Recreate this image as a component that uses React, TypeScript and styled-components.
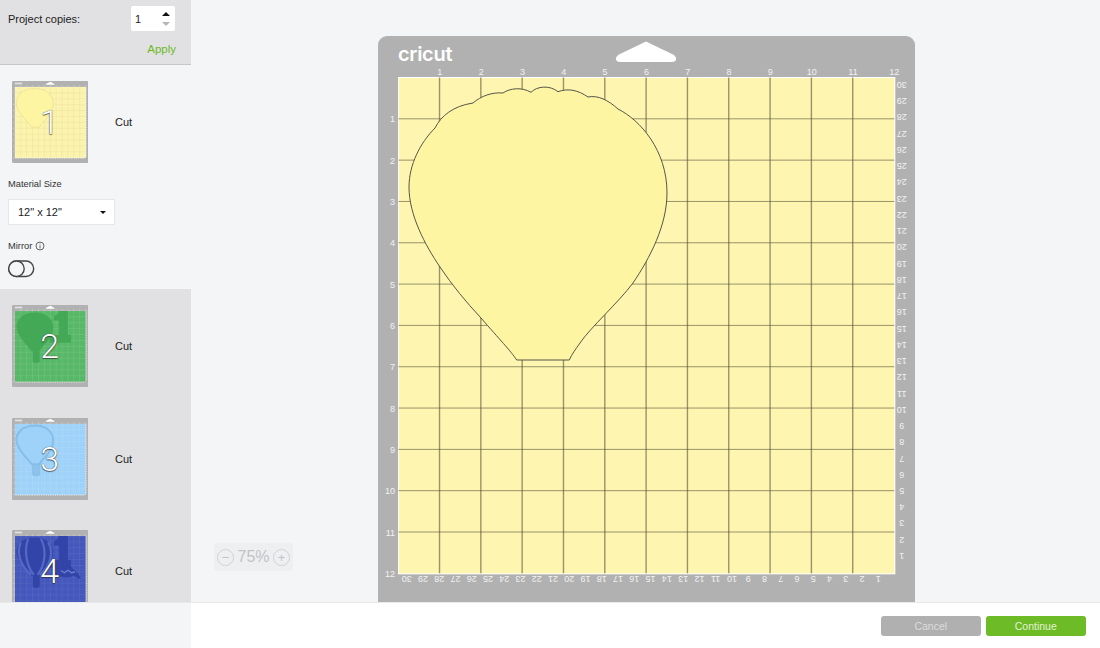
import React from "react";
import styled, { createGlobalStyle } from "styled-components";

const GlobalStyle = createGlobalStyle`
  html, body {
    margin: 0;
    padding: 0;
    height: 100%;
    overflow: hidden;
    background: #f4f5f7;
    font-family: "Liberation Sans", Arial, sans-serif;
    color: #222;
  }
`;

const Page = styled.div`
  width: 1100px;
  height: 648px;
  display: flex;
  flex-direction: column;
`;

const Body = styled.div`
  flex: 1;
  min-height: 0;
  display: flex;
`;

const Sidebar = styled.aside`
  width: 191px;
  flex-shrink: 0;
  overflow: hidden;
  display: flex;
  flex-direction: column;
  background: #e1e1e3;
`;

const CopiesPanel = styled.div`
  height: 65px;
  box-sizing: border-box;
  flex-shrink: 0;
  padding: 6px 16px 0 8px;
  background: #e1e1e3;
  border-bottom: 1px solid #c6c6c8;
`;

const CopiesRow = styled.div`
  display: flex;
  align-items: center;
  justify-content: space-between;
  font-size: 11px;
`;

const Stepper = styled.div`
  width: 44px;
  height: 25px;
  box-sizing: border-box;
  padding: 0 5px 0 4px;
  display: flex;
  align-items: center;
  justify-content: space-between;
  background: #fff;
  border-radius: 2px;
  font-size: 11px;
`;

const StepperArrows = styled.div`
  display: flex;
  flex-direction: column;
  gap: 6px;
`;

const Arrow = styled.span<{ $down?: boolean }>`
  width: 0;
  height: 0;
  border-left: 4px solid transparent;
  border-right: 4px solid transparent;
  ${(p) =>
    p.$down ? "border-top: 4px solid #b5b5b5;" : "border-bottom: 4px solid #111;"}
`;

const ApplyLink = styled.div`
  margin: 11px -1px 0 0;
  text-align: right;
  font-size: 11.5px;
  line-height: 14px;
  color: #6cb926;
`;

const ActiveSection = styled.section`
  height: 224px;
  flex-shrink: 0;
  box-sizing: border-box;
  padding-top: 16px;
  background: #f4f5f7;
`;

const MatList = styled.div`
  padding-top: 16px;
  display: flex;
  flex-direction: column;
  gap: 30.7px;
`;

const MatRow = styled.div`
  display: flex;
  align-items: center;
  padding-left: 11.5px;
`;

const Thumb = styled.div`
  position: relative;
  width: 76.6px;
  height: 82px;
  flex-shrink: 0;

  svg {
    display: block;
    width: 100%;
    height: 100%;
  }
`;

const ThumbDigit = styled.span`
  position: absolute;
  inset: 0;
  display: flex;
  align-items: center;
  justify-content: center;
  font-family: Roboto, "Liberation Sans", sans-serif;
  font-weight: 300;
  font-size: 34px;
  color: #fff;
  text-shadow:
    0 0 1px rgba(30, 30, 30, 1),
    0 1px 1px rgba(30, 30, 30, 0.6);
`;

const CutLabel = styled.span`
  margin-left: 26.9px;
  font-size: 11px;
`;

const OptionLabel = styled.div`
  display: flex;
  align-items: center;
  gap: 3px;
  padding-left: 8px;
  font-size: 9.3px;
  line-height: 12px;
  color: #333;
`;

const SizeLabel = styled(OptionLabel)`
  margin-top: 15px;
`;

const MirrorLabel = styled(OptionLabel)`
  margin-top: 15px;
`;

const SizeSelect = styled.div`
  width: 107px;
  height: 26px;
  box-sizing: border-box;
  margin: 9px 0 0 8px;
  padding: 0 8px 0 9px;
  display: flex;
  align-items: center;
  justify-content: space-between;
  background: #fff;
  border: 1px solid #e6e7ea;
  font-size: 11px;
`;

const Caret = styled.span`
  width: 0;
  height: 0;
  border-left: 3.5px solid transparent;
  border-right: 3.5px solid transparent;
  border-top: 3.5px solid #111;
`;

const MirrorToggle = styled.svg`
  display: block;
  margin: 8px 0 0 8px;
`;

const Workspace = styled.main`
  position: relative;
  flex: 1;
  min-width: 0;
  overflow: hidden;
  display: flex;
  justify-content: center;
  padding: 36px 0 0 2px;
  background: #f4f5f7;
`;

const MainMat = styled.svg`
  display: block;
  flex-shrink: 0;
`;

const ZoomControl = styled.div`
  position: absolute;
  left: 23px;
  top: 543px;
  width: 79px;
  height: 28px;
  box-sizing: border-box;
  padding: 0 3px;
  display: flex;
  align-items: center;
  justify-content: space-between;
  background: #eeeff1;
  border-radius: 3px;
  font-size: 16px;
  color: #c2c3c6;
`;

const ZoomButton = styled.span`
  width: 15px;
  height: 15px;
  display: flex;
  align-items: center;
  justify-content: center;
  border: 1px solid #d2d3d6;
  border-radius: 50%;
  font-size: 13px;
  line-height: 1;
  color: #c2c3c6;
`;

const Footer = styled.footer`
  height: 46px;
  flex-shrink: 0;
  display: flex;
  box-sizing: border-box;
  border-top: 1px solid #e8e9eb;
`;

const FooterAside = styled.div`
  width: 191px;
  background: #f4f5f7;
`;

const FooterActions = styled.div`
  flex: 1;
  display: flex;
  justify-content: flex-end;
  gap: 4.5px;
  padding: 13px 14px 0 0;
  background: #fff;
`;

const ActionButton = styled.button<{ $primary?: boolean }>`
  width: 100.5px;
  height: 20px;
  padding: 0;
  border: 0;
  border-radius: 3px;
  font-family: inherit;
  font-size: 10.5px;
  background: ${(p) => (p.$primary ? "#6cbb27" : "#b0b0b0")};
  color: ${(p) => (p.$primary ? "#e4f2d4" : "#dcdcdc")};
`;

const X0 = 398.5;
const Y0 = 77.5;
const CELL = 41.32;
const END_X = X0 + CELL * 12;
const END_Y = Y0 + CELL * 12;
const inches = Array.from({ length: 12 }, (_, i) => i + 1);
const halfInches = Array.from({ length: 30 }, (_, i) => i);

const BALLOON =
  "M516.7 360 C510 350 500 340 481 318 C466 302 452 285 440 267 C425 245 409 215 409 187 C409 165 420 143 435 128 C441 116 453 106 473 103 C481 96 492 92 503 93 C510 88 522 87 531 92.3 C537 86 550 85 558 91.7 C568 88 578 90 588 97 C598 95 608 100 618 109 C640 120 667 150 667 193 C667 225 650 258 633 283 C618 303 590 328 580 343 C575 350 572 354 569.3 360 Z";
const NECK = "M523 340 H572 V428 Q572 440 560 440 H535 Q523 440 523 428 Z";
const ONE =
  "M672 112 Q700 105 708 78 L770 78 L770 245 L791 245 L791 300 L640 300 L640 245 L708 245 L708 145 L672 145 Z";
const RIBBON =
  "M680 300 L790 290 C810 310 840 340 862 372 L845 378 L810 355 C780 375 730 375 680 350 Z";

type MatColors = { paper: string; line: string; lineOpacity: number; fine?: string };

// the thumbnails use the same page coordinates as the big mat, rim text becomes ticks
const RimLabels = () => (
  <g fontSize="9" fill="#f1f1f1" fontFamily="'Liberation Sans', sans-serif">
    {inches.map((n) => (
      <text key={n} x={X0 + CELL * n} y="75" textAnchor="middle">
        {n}
      </text>
    ))}
    {inches.map((n) => (
      <text key={n} x="395" y={Y0 + CELL * n + 3.5} textAnchor="end">
        {n}
      </text>
    ))}
    {halfInches.map((i) => (
      <text
        key={i}
        x={406.7 + 16.26 * i}
        y="578.8"
        textAnchor="middle"
        transform={`rotate(180 ${406.7 + 16.26 * i} 578.8)`}
        dy="3"
      >
        {30 - i}
      </text>
    ))}
    {halfInches.map((i) => (
      <text
        key={i}
        x="901.7"
        y={85 + 16.24 * i}
        textAnchor="middle"
        transform={`rotate(180 901.7 ${85 + 16.24 * i})`}
        dy="3"
      >
        {30 - i}
      </text>
    ))}
  </g>
);

const RimTicks = () => (
  <g fill="#f1f1f1" opacity="0.75">
    <rect x="398" y="47" width="52" height="12" />
    {inches.map((n) => (
      <rect key={n} x={X0 + CELL * n - 3} y="68" width="6" height="6" />
    ))}
    {inches.map((n) => (
      <rect key={n} x="388" y={Y0 + CELL * n - 3} width="6" height="6" />
    ))}
    {halfInches.map((i) => (
      <rect key={i} x={403 + 16.26 * i} y="576" width="7" height="6" />
    ))}
    {halfInches.map((i) => (
      <rect key={i} x="898" y={82 + 16.24 * i} width="6" height="7" />
    ))}
  </g>
);

const MatBase: React.FC<MatColors & { children?: React.ReactNode }> = ({
  paper,
  line,
  lineOpacity,
  fine,
  children,
}) => (
  <>
    <rect x="378" y="36" width="537" height="574" rx="9" fill="#b1b1b1" />
    {!fine && (
      <text x="398" y="60.5" fontFamily="Inter, sans-serif" fontWeight="600" fontSize="20" letterSpacing="-0.3" fill="#fff">
        cricut
      </text>
    )}
    <path
      d="M646 41.5 L673 54.5 Q677 57 676 60 Q675 62 672 62 L620 62 Q617 62 616 60 Q615 57 619 54.5 Z"
      fill="#fff"
    />
    <rect x={X0 - 0.5} y={Y0 - 0.5} width={CELL * 12 + 1.5} height={CELL * 12 + 1.5} fill="#fff" />
    <rect x={X0 + 0.5} y={Y0 + 0.5} width={CELL * 12 - 0.5} height={CELL * 12 - 0.5} fill={paper} />
    {fine &&
      Array.from({ length: 47 }, (_, i) => i + 1).map((i) => (
        <g key={i} stroke={fine} strokeWidth="2">
          <line x1={X0 + (CELL / 4) * i} x2={X0 + (CELL / 4) * i} y1={Y0} y2={END_Y} />
          <line x1={X0} x2={END_X} y1={Y0 + (CELL / 4) * i} y2={Y0 + (CELL / 4) * i} />
        </g>
      ))}
    {inches.slice(0, 11).map((n) => (
      <g key={n} stroke={line} strokeOpacity={lineOpacity}>
        <line x1={X0 + CELL * n - 0.3} x2={X0 + CELL * n - 0.3} y1={Y0} y2={END_Y} strokeWidth={fine ? 3 : 1.4} />
        <line x1={X0} x2={END_X} y1={Y0 + CELL * n} y2={Y0 + CELL * n} strokeWidth={fine ? 3 : 1} />
      </g>
    ))}
    {fine ? <RimTicks /> : <RimLabels />}
    {children}
  </>
);

const YellowThumb = () => (
  <svg viewBox="378 36 537 574">
    <MatBase paper="#fef6b0" line="#e0d692" lineOpacity={0.7} fine="#f8f0ac">
      <path d={BALLOON} fill="#fdf5a2" stroke="#e9df94" strokeWidth="5" />
    </MatBase>
  </svg>
);

const GreenThumb = () => (
  <svg viewBox="378 36 537 574">
    <MatBase paper="#58b868" line="#a0d8aa" lineOpacity={0.5} fine="#5dbb6d">
      <path d={ONE} fill="#43a957" />
      <path d={NECK} fill="#43a957" />
      <path d={BALLOON} fill="#43a957" />
    </MatBase>
  </svg>
);

const BlueThumb = () => (
  <svg viewBox="378 36 537 574">
    <MatBase paper="#9fd2f9" line="#c4e3fb" lineOpacity={0.55} fine="#a4d5fa">
      <path d={NECK} fill="#8cc3ea" stroke="#86bee8" strokeWidth="6" />
      <path d={BALLOON} fill="#9fd2f9" stroke="#86bee8" strokeWidth="14" />
    </MatBase>
  </svg>
);

const IndigoThumb = () => (
  <svg viewBox="378 36 537 574">
    <MatBase paper="#4658bb" line="#7482cf" lineOpacity={0.5} fine="#4b5dbe">
      <path d={ONE} fill="#3244a8" />
      <path d={RIBBON} fill="#3244a8" />
      <path d={NECK} fill="#3244a8" />
      <path d={BALLOON} fill="#3244a8" />
      <g fill="none" stroke="#5667c4" strokeWidth="16">
        <path d="M440 125 C408 190 432 280 512 350" />
        <path d="M492 98 C462 170 475 280 530 350" />
        <path d="M580 95 C622 170 612 280 558 350" />
        <path d="M632 122 C672 190 652 280 574 350" />
      </g>
      <path d="M720 320 L745 335 L770 318 L795 335 L820 330" fill="none" stroke="#6f7fd0" strokeWidth="9" />
    </MatBase>
  </svg>
);

const InfoIcon = () => (
  <svg width="10" height="10" viewBox="0 0 10 10" fill="none" stroke="#444" strokeWidth="0.8">
    <circle cx="5" cy="5" r="4" />
    <line x1="5" y1="4.3" x2="5" y2="7.4" />
    <line x1="5" y1="2.5" x2="5" y2="3.4" />
  </svg>
);

const mats = [
  { digit: 2, art: <GreenThumb /> },
  { digit: 3, art: <BlueThumb /> },
  { digit: 4, art: <IndigoThumb /> },
];

const App: React.FC = () => (
  <Page>
    <GlobalStyle />
    <Body>
      <Sidebar>
        <CopiesPanel>
          <CopiesRow>
            <span>Project copies:</span>
            <Stepper>
              1
              <StepperArrows>
                <Arrow />
                <Arrow $down />
              </StepperArrows>
            </Stepper>
          </CopiesRow>
          <ApplyLink>Apply</ApplyLink>
        </CopiesPanel>

        <ActiveSection>
          <MatRow>
            <Thumb>
              <YellowThumb />
              <ThumbDigit>1</ThumbDigit>
            </Thumb>
            <CutLabel>Cut</CutLabel>
          </MatRow>
          <SizeLabel>Material Size</SizeLabel>
          <SizeSelect>
            12" x 12"
            <Caret />
          </SizeSelect>
          <MirrorLabel>
            Mirror <InfoIcon />
          </MirrorLabel>
          <MirrorToggle width="27" height="18" viewBox="0 0 27 18" fill="none" stroke="#444" strokeWidth="1.4">
            <rect x="0.7" y="1" width="25" height="15.5" rx="7.75" />
            <circle cx="8.45" cy="8.75" r="7.75" fill="#f4f5f7" />
          </MirrorToggle>
        </ActiveSection>

        <MatList>
          {mats.map((m) => (
            <MatRow key={m.digit}>
              <Thumb>
                {m.art}
                <ThumbDigit>{m.digit}</ThumbDigit>
              </Thumb>
              <CutLabel>Cut</CutLabel>
            </MatRow>
          ))}
        </MatList>
      </Sidebar>

      <Workspace>
        <MainMat width="537" height="574" viewBox="378 36 537 574">
          <MatBase paper="#fef6b0" line="#55523a" lineOpacity={0.6}>
            <path d={BALLOON} fill="#fdf5a2" stroke="#55554a" strokeWidth="1" />
          </MatBase>
        </MainMat>
        <ZoomControl>
          <ZoomButton>−</ZoomButton>
          75%
          <ZoomButton>+</ZoomButton>
        </ZoomControl>
      </Workspace>
    </Body>
    <Footer>
      <FooterAside />
      <FooterActions>
        <ActionButton>Cancel</ActionButton>
        <ActionButton $primary>Continue</ActionButton>
      </FooterActions>
    </Footer>
  </Page>
);

export default App;
